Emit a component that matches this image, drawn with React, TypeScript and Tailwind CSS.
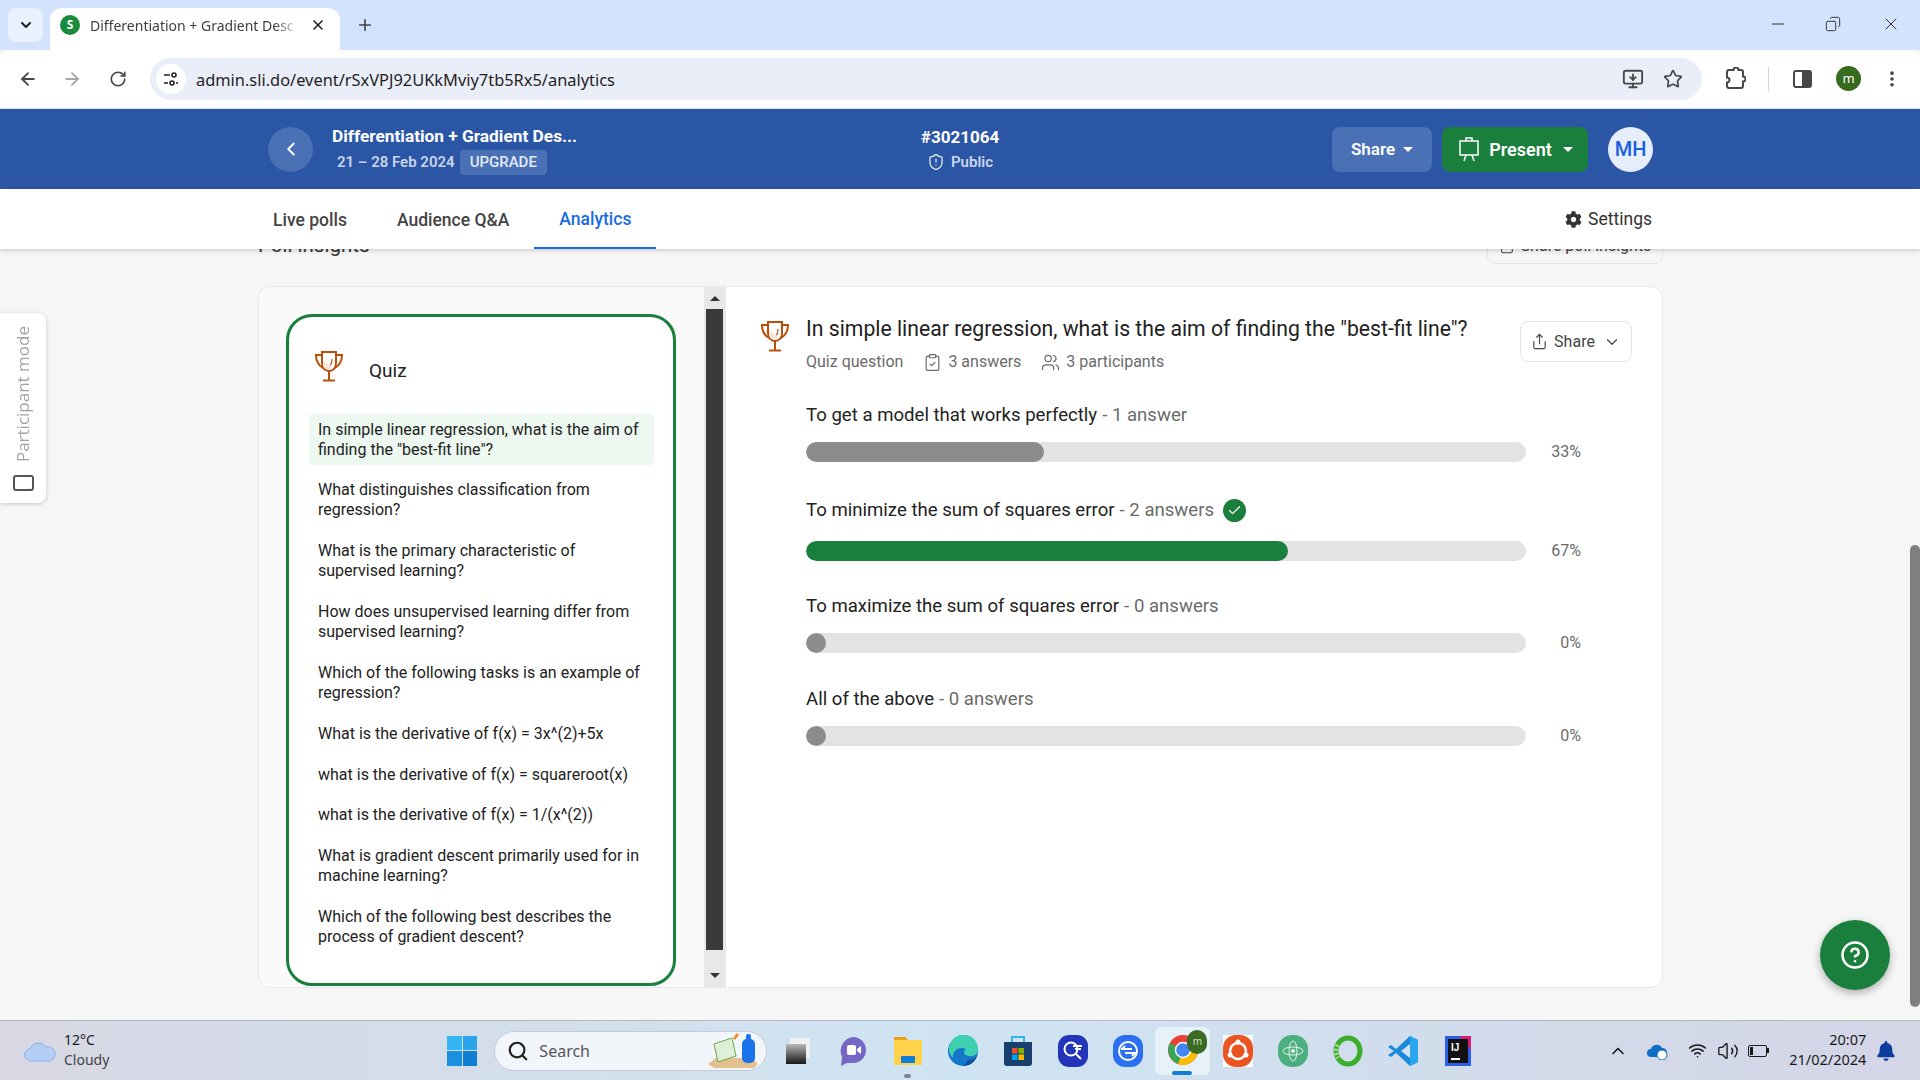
import { ArrowLeft, ArrowRight, ChevronDown, ChevronLeft, ChevronUp, CircleHelp, ClipboardCheck, MonitorDown, MoreVertical, Plus, RotateCw, Search, ShieldAlert, Share, Star, Users, Volume2, Wifi, X, Check, Minus, Copy } from 'lucide-react';
import { FaBell, FaCog } from 'react-icons/fa';

const questions = [
  ['In simple linear regression, what is the aim of', 'finding the "best-fit line"?'],
  ['What distinguishes classification from', 'regression?'],
  ['What is the primary characteristic of', 'supervised learning?'],
  ['How does unsupervised learning differ from', 'supervised learning?'],
  ['Which of the following tasks is an example of', 'regression?'],
  ['What is the derivative of f(x) = 3x^(2)+5x'],
  ['what is the derivative of f(x) = squareroot(x)'],
  ['what is the derivative of f(x) = 1/(x^(2))'],
  ['What is gradient descent primarily used for in', 'machine learning?'],
  ['Which of the following best describes the', 'process of gradient descent?'],
];

const answers = [
  { label: 'To get a model that works perfectly', count: '1 answer', pct: 33, correct: false },
  { label: 'To minimize the sum of squares error', count: '2 answers', pct: 67, correct: true },
  { label: 'To maximize the sum of squares error', count: '0 answers', pct: 0, correct: false },
  { label: 'All of the above', count: '0 answers', pct: 0, correct: false },
];

function QuizTrophy({ className }: { className?: string }) {
  return (
    <svg width="30" height="32" viewBox="0 0 30 32" fill="none" stroke="#b8500c" strokeWidth="2" className={className}>
      <path d="M8 2h14v11c0 5-3 8-7 8s-7-3-7-8z" />
      <path d="M8 5H2c0 6 2 10 7 13M22 5h6c0 6-2 10-7 13" />
      <path d="M15 21v9M9 30.500h12" />
      <path d="M10 18c-1-3-1-5 0-7l8 6-3 3z" fill="#f6e6da" stroke="none" />
      <path d="M18 9c0 3 0 5-2 6" strokeWidth="1.2" />
    </svg>
  );
}

function ChromeBar() {
  return (
    <div className="font-['Noto_Sans',sans-serif]">
      <div className="h-[50px] bg-[#d3e3fd] flex items-end relative">
        <div className="w-[35px] h-[34px] mb-2 ml-2 rounded-lg bg-[#e9f0fe] flex items-center justify-center">
          <ChevronDown size={16} strokeWidth={3} className="text-[#222]" />
        </div>
        <div className="ml-[7px] w-[290px] h-[42px] bg-white rounded-t-xl flex items-center pl-[10px] pb-[8px]">
          <div className="w-5 h-5 rounded-full bg-[#1a8a3e] text-white text-[12px] font-bold flex items-center justify-center">S</div>
          <div className="ml-[10px] w-[210px] whitespace-nowrap text-[14px] text-[#3c4043] [mask-image:linear-gradient(to_right,black_88%,transparent)]">Differentiation + Gradient Desc</div>
          <X size={16} strokeWidth={2.5} className="ml-[10px] text-[#222]" />
        </div>
        <Plus size={18} strokeWidth={2.2} className="ml-4 mb-[16px] text-[#444]" />
        <div className="ml-auto flex items-center pr-[19px] mb-[16px] text-[#222]">
          <Minus size={20} strokeWidth={1.1} />
          <Copy size={16} strokeWidth={1.3} className="ml-[37px] scale-x-[-1]" />
          <X size={20} strokeWidth={1.1} className="ml-[40px]" />
        </div>
      </div>
      <div className="h-[60px] bg-white border-b border-[#dfdfdf] rounded-t-xl -mt-px flex items-center text-[#474747]">
        <ArrowLeft size={20} strokeWidth={2.2} className="ml-[18px]" />
        <ArrowRight size={20} strokeWidth={2.2} className="ml-[24px] text-[#a8a8a8]" />
        <RotateCw size={18} strokeWidth={2.2} className="ml-[27px]" />
        <div className="ml-[23px] w-[1552px] h-[42px] rounded-full bg-[#eaeef8] flex items-center pl-[6px] pr-[19px]">
          <div className="w-[30px] h-[30px] rounded-full bg-white flex items-center justify-center">
            <svg width="16" height="16" viewBox="0 0 16 16" fill="none" stroke="#222" strokeWidth="1.6">
              <path d="M1 4h6M1 12h4" />
              <circle cx="11" cy="4" r="2" />
              <circle cx="9" cy="12" r="2" />
              <path d="M13 12h2" />
            </svg>
          </div>
          <span className="ml-[10px] pt-[3px] text-[16.400px] text-[#1f1f1f]">admin.sli.do/event/rSxVPJ92UKkMviy7tb5Rx5/analytics</span>
          <MonitorDown size={22} strokeWidth={2} className="ml-auto" />
          <Star size={20} strokeWidth={2} className="ml-[19px]" />
        </div>
        <svg width="22" height="24" viewBox="0 0 22 24" fill="none" stroke="#474747" strokeWidth="2" className="ml-[22px]">
          <path d="M5 3h4.500a2.500 2.500 0 0 1 5 0H17a2 2 0 0 1 2 2v4.500a2.500 2.500 0 0 1 0 5V19a2 2 0 0 1-2 2H5a2 2 0 0 1-2-2v-3.500a2.500 2.500 0 0 0 0-5V5a2 2 0 0 1 2-2z" />
        </svg>
        <div className="ml-[22px] w-px h-6 bg-[#c7d8f0]" />
        <div className="ml-[24px] w-[19px] h-[18px] border-2 border-[#474747] rounded-[3px] flex justify-end">
          <div className="w-[8px] bg-[#474747]" />
        </div>
        <div className="ml-[24px] w-[25px] h-[25px] rounded-full bg-[#386a1f] text-white text-[13px] flex items-center justify-center">m</div>
        <MoreVertical size={20} strokeWidth={2.4} className="ml-[21px]" />
      </div>
    </div>
  );
}

function AppHeader() {
  return (
    <header className="relative z-10 h-[80px] bg-[#2a56a5] flex items-center pl-[268px] pr-[267px] text-white font-['Roboto',sans-serif]">
      <div className="w-[45px] h-[45px] rounded-full bg-[#4a70b5] flex items-center justify-center">
        <ChevronLeft size={22} strokeWidth={2} />
      </div>
      <div className="ml-[19px] w-[300px]">
        <div className="text-[17.300px] font-bold leading-[24px]">Differentiation + Gradient Des...</div>
        <div className="flex items-center mt-[2px]">
          <span className="ml-[5px] text-[15px] font-semibold text-[#c9d5ec]">21 – 28 Feb 2024</span>
          <span className="ml-[5px] h-[25px] px-[10px] rounded bg-[#4a70b5] text-[15px] font-medium leading-[25px] text-[#e3eaf7]">UPGRADE</span>
        </div>
      </div>
      <div className="ml-[228px] w-[200px] flex flex-col items-center">
        <div className="text-[17px] font-bold leading-[24px]">#3021064</div>
        <div className="flex items-center gap-[6px] mt-[2px]">
          <ShieldAlert size={18} strokeWidth={1.5} />
          <span className="text-[15px] font-semibold text-[#c9d5ec]">Public</span>
        </div>
      </div>
      <div className="ml-auto flex items-center">
        <div className="w-[100px] h-[45px] pt-[1px] rounded-lg bg-[#4a70b5] flex items-center justify-center gap-[8px] text-[17px] font-semibold">
          Share
          <span className="w-0 h-0 border-x-[5px] border-x-transparent border-t-[5px] border-t-white" />
        </div>
        <div className="ml-[10px] w-[146px] h-[45px] rounded-lg bg-[#1a7f3c] flex items-center justify-center text-[18px] font-semibold">
          <svg width="24" height="26" viewBox="0 0 24 26" fill="none" stroke="white" strokeWidth="1.500">
            <path d="M3 5h18v14H3zM9 5V2h6v3M9 19l-2 6M15 19l2 6" />
          </svg>
          <span className="ml-[8px]">Present</span>
          <span className="ml-[11px] w-0 h-0 border-x-[5px] border-x-transparent border-t-[5px] border-t-white" />
        </div>
        <div className="ml-[20px] w-[45px] h-[45px] rounded-full bg-[#e6eefc] text-[#1a5fe0] flex items-center justify-center text-[20px] font-medium">MH</div>
      </div>
    </header>
  );
}

function AppNav() {
  return (
    <nav className="relative z-10 h-[60px] bg-white shadow-[0_2px_4px_rgba(0,0,0,0.15)] flex pl-[248px] pr-[268px] text-[17.500px] font-medium font-['Roboto',sans-serif] text-[#444]">
      <div className="px-[25px] pt-[2px] flex items-center">Live polls</div>
      <div className="px-[25px] pt-[2px] flex items-center">Audience Q&amp;A</div>
      <div className="px-[25px] pt-[2px] flex items-center text-[#1a6be0] border-b-2 border-[#1a6be0]">Analytics</div>
      <div className="ml-auto pt-[1px] flex items-center gap-[6px] text-[#333] font-normal">
        <FaCog size={17} />
        Settings
      </div>
    </nav>
  );
}

function QuizList() {
  return (
    <div className="w-[467px] bg-[#fafafa] rounded-l-xl flex">
      <div className="ml-[27px] mt-[27px] w-[390px] h-[672px] rounded-[26px] border-[3px] border-[#1a7f3c] bg-white pl-[20px] pr-[19px]">
        <div className="flex items-center mt-[38px] h-[32px] pl-[5px]">
          <QuizTrophy className="mb-[10px]" />
          <span className="ml-[25px] text-[19px] text-[#222]">Quiz</span>
        </div>
        <div className="mt-[27px] flex flex-col gap-[9.850px] text-[16px] leading-[20px] text-[#222]">
          {questions.map((q, i) => (
            <div key={i} className={`px-[9px] py-[5.5px] rounded ${i === 0 ? 'bg-[#ecf8f0]' : ''}`}>
              {q.map((line) => <div key={line} className="whitespace-nowrap">{line}</div>)}
            </div>
          ))}
        </div>
      </div>
      <div className="ml-auto w-[22px] bg-[#e8e8e8] flex flex-col items-center pl-[2px] pr-[3px]">
        <div className="h-[22px] flex items-center">
          <span className="w-0 h-0 border-x-[5px] border-x-transparent border-b-[5px] border-b-[#333]" />
        </div>
        <div className="w-full h-[641px] bg-[#3a3a3a]" />
        <div className="flex-1 flex items-end pb-[9px]">
          <span className="w-0 h-0 border-x-[5px] border-x-transparent border-t-[5px] border-t-[#333]" />
        </div>
      </div>
    </div>
  );
}

function AnswerRow({ a }: { a: (typeof answers)[number] }) {
  return (
    <div className="first:-mb-[2px] last:mt-[1px]">
      <div className={`flex items-center text-[18.600px] ${a.correct ? 'h-[35px]' : 'h-[26px]'}`}>
        <span className="text-[#222]">{a.label}</span>
        <span className="text-[#6b6b6b] ml-[5px]">- {a.count}</span>
        {a.correct && (
          <span className="ml-[9px] w-[23px] h-[23px] rounded-full bg-[#1a7f3c] flex items-center justify-center">
            <Check size={15} strokeWidth={2} className="text-white" />
          </span>
        )}
      </div>
      <div className="flex items-center mt-[11px]">
        <div className="w-[720px] h-[20px] rounded-full bg-[#e3e3e3] overflow-hidden">
          <div
            className={`h-full min-w-[20px] rounded-full ${a.correct ? 'bg-[#1a7f3c]' : 'bg-[#8c8c8c]'}`}
            style={{ width: `${a.pct}%` }}
          />
        </div>
        <span className="w-[55px] text-right text-[16px] text-[#6b6b6b]">{a.pct}%</span>
      </div>
    </div>
  );
}

function QuestionPanel() {
  return (
    <div className="flex-1 pl-[34px] pr-[30px] pt-[27px] font-['Roboto',sans-serif]">
      <div className="flex">
        <QuizTrophy className="mt-[6px]" />
        <div className="ml-[16px]">
          <div className="text-[21.200px] leading-[30px] text-[#222]">In simple linear regression, what is the aim of finding the "best-fit line"?</div>
          <div className="flex items-center mt-[6px] text-[16px] text-[#6b6b6b]">
            Quiz question
            <ClipboardCheck size={19} strokeWidth={1.5} className="ml-[20px] mr-[6px]" />
            3 answers
            <Users size={19} strokeWidth={1.5} className="ml-[20px] mr-[6px]" />
            3 participants
          </div>
        </div>
        <div className="ml-auto mt-[7px] w-[112px] h-[41px] border border-[#e3e3e3] rounded-lg flex items-center justify-center gap-[6px] text-[16px] text-[#444]">
          <Share size={17} strokeWidth={1.6} />
          Share
          <ChevronDown size={18} strokeWidth={1.6} className="ml-[2px]" />
        </div>
      </div>
      <div className="ml-[46px] mt-[29px] flex flex-col gap-[31px]">
        {answers.map((a) => <AnswerRow key={a.label} a={a} />)}
      </div>
    </div>
  );
}

function TrayIcon({ children }: { children: React.ReactNode }) {
  return <div className="relative w-[55px] h-[40px] flex items-center justify-center">{children}</div>;
}

function Taskbar() {
  return (
    <footer className="h-[60px] border-t border-[#b4b8c4] bg-gradient-to-r from-[#d8d8e4] via-[#cfe4f2] to-[#d4d5e6] flex items-center font-['Noto_Sans',sans-serif] text-[#1b1b1b]">
      <div className="ml-[24px] w-[32px]">
        <svg width="32" height="22" viewBox="0 0 32 22">
          <path d="M7 21a6 6 0 0 1-1-12 9 9 0 0 1 16-2 7 7 0 0 1 4 14z" fill="#b4cdf2" stroke="#8fb1e8" />
        </svg>
      </div>
      <div className="ml-[8px] text-[14px] leading-[20px] -mt-[2px]">
        <div>12°C</div>
        <div className="text-[#444]">Cloudy</div>
      </div>
      <div className="ml-[338px] w-[30px] h-[30px] grid grid-cols-2 gap-[1px]">
        <div className="bg-[#35b6f2]" /><div className="bg-[#2ba5ea]" />
        <div className="bg-[#1c90e0]" /><div className="bg-[#0f7fd6]" />
      </div>
      <div className="ml-[17px] w-[273px] h-[40px] rounded-full bg-[#f2f6fb] border border-[#c4ccd8] flex items-center pl-[12px] pr-[6px] text-[16px] text-[#555]">
        <Search size={22} strokeWidth={2.4} className="text-[#222]" />
        <span className="ml-[10px]">Search</span>
        <svg width="54" height="38" viewBox="0 0 54 38" className="ml-auto">
          <path d="M2 32l8-6h36l6 6-4 4H8z" fill="#e3c08d" />
          <path d="M8 12l18-6 4 18-18 6z" fill="#dff0d8" stroke="#6aa84f" />
          <path d="M27 6l4-5 2 2-4 5z" fill="#f28c28" />
          <rect x="36" y="7" width="13" height="24" rx="5" fill="#1a73e8" />
          <rect x="40" y="2" width="5" height="6" rx="2" fill="#1a73e8" />
        </svg>
      </div>
      <div className="ml-[3px] flex items-center">
        <TrayIcon>
          <div className="relative w-[24px] h-[26px]">
            <div className="absolute right-0 top-0 w-[20px] h-[20px] bg-[#f0f0f0]" />
            <div className="absolute left-0 bottom-0 w-[20px] h-[20px] bg-gradient-to-b from-[#bbb] to-[#1b1b1b]" />
          </div>
        </TrayIcon>
        <TrayIcon>
          <svg width="30" height="32" viewBox="0 0 30 32">
            <path d="M15 2a13 13 0 0 1 0 26H9l-6 3 1-9A14 14 0 0 1 15 2z" fill="#7568c4" />
            <rect x="9" y="10" width="9" height="10" rx="2" fill="#fff" />
            <path d="M19 14l4-3v8l-4-3z" fill="#fff" />
          </svg>
        </TrayIcon>
        <TrayIcon>
          <svg width="32" height="30" viewBox="0 0 32 30">
            <path d="M2 1h11l3 3h14v25H2z" fill="#ffd24a" />
            <path d="M2 1h11l3 3H2z" fill="#e8a317" />
            <rect x="9" y="20" width="14" height="7" rx="1" fill="#0f7fd6" />
          </svg>
          <div className="absolute -bottom-[7px] left-[24px] w-[7px] h-[4px] rounded-full bg-[#7d8590]" />
        </TrayIcon>
        <TrayIcon>
          <svg width="32" height="32" viewBox="0 0 32 32">
            <circle cx="16" cy="16" r="15" fill="#1577c9" />
            <path d="M2 14A14 14 0 0 1 31 14c0 6-5 8-10 7-5-1-5-5-2-7-6-3-14 1-13 9a12 12 0 0 1-4-9z" fill="#3fd0b0" />
            <path d="M21 25c4 0 7-1 9-4-2 6-7 10-14 10 2-1 3-3 5-6z" fill="#0d4fa3" />
          </svg>
        </TrayIcon>
        <TrayIcon>
          <svg width="30" height="32" viewBox="0 0 30 32">
            <path d="M9 7V2h12v5" fill="none" stroke="#2cb7e8" strokeWidth="2" />
            <path d="M1 7h28v21a3 3 0 0 1-3 3H4a3 3 0 0 1-3-3z" fill="#173f70" />
            <rect x="9" y="13" width="5.5" height="5.5" fill="#f25022" />
            <rect x="15.5" y="13" width="5.5" height="5.5" fill="#7fba00" />
            <rect x="9" y="19.5" width="5.5" height="5.5" fill="#00a4ef" />
            <rect x="15.5" y="19.5" width="5.5" height="5.5" fill="#ffb900" />
          </svg>
        </TrayIcon>
        <TrayIcon>
          <svg width="30" height="32" viewBox="0 0 30 32">
            <rect width="30" height="32" rx="11" fill="#2434b8" />
            <circle cx="13" cy="14" r="6.5" fill="none" stroke="#fff" strokeWidth="2" />
            <path d="M18 19l5 5M15 11h9M17 14h6" stroke="#fff" strokeWidth="2" />
          </svg>
        </TrayIcon>
        <TrayIcon>
          <svg width="30" height="32" viewBox="0 0 30 32">
            <rect width="30" height="32" rx="12" fill="#2b70f0" />
            <circle cx="15" cy="16" r="9" fill="none" stroke="#fff" strokeWidth="2" />
            <path d="M8 14h11M12 11l-3 3M23 18H12M19 21l3-3" stroke="#fff" strokeWidth="2" />
          </svg>
        </TrayIcon>
        <div className="relative w-[55px] h-[48px] rounded-md bg-[#e6f1f8] flex items-center justify-center">
          <svg width="30" height="30" viewBox="0 0 30 30" className="mb-[2px]">
            <circle cx="15" cy="15" r="15" fill="#e94235" />
            <path d="M15 15 2 8A15 15 0 0 0 10 29z" fill="#34a853" />
            <path d="M15 15 10 29.2A15 15 0 0 0 29.5 12z" fill="#fbbc04" />
            <circle cx="15" cy="15" r="7.5" fill="#4285f4" stroke="#fff" strokeWidth="1.5" />
          </svg>
          <div className="absolute top-[3px] right-[3px] w-[20px] h-[24px] rounded-full bg-[#3a6a24] text-[#cfe0c0] text-[10px] flex items-center justify-center">m</div>
          <div className="absolute bottom-0 left-[17px] w-[20px] h-[4px] rounded-full bg-[#0f7fd6]" />
        </div>
        <TrayIcon>
          <svg width="30" height="32" viewBox="0 0 30 32">
            <rect width="30" height="32" fill="#fff" />
            <rect width="30" height="32" rx="13" fill="#e95420" />
            <circle cx="15" cy="16" r="8" fill="none" stroke="#fff" strokeWidth="2.5" />
            <circle cx="15" cy="7" r="2.5" fill="#fff" />
            <circle cx="7" cy="20" r="2.5" fill="#fff" />
            <circle cx="23" cy="20" r="2.5" fill="#fff" />
          </svg>
        </TrayIcon>
        <TrayIcon>
          <svg width="30" height="32" viewBox="0 0 30 32">
            <rect width="30" height="32" rx="14" fill="#4caf7f" />
            <ellipse cx="15" cy="16" rx="10" ry="4" fill="none" stroke="#e8f5e9" />
            <ellipse cx="15" cy="16" rx="4" ry="10" fill="none" stroke="#e8f5e9" />
            <circle cx="15" cy="16" r="2" fill="#e8f5e9" />
          </svg>
        </TrayIcon>
        <TrayIcon>
          <svg width="30" height="32" viewBox="0 0 30 32">
            <ellipse cx="15" cy="16" rx="12" ry="13" fill="none" stroke="#3cae2d" strokeWidth="5" />
            <path d="M5 10a12 13 0 0 0 0 13" fill="none" stroke="#a4d89a" strokeWidth="5" strokeDasharray="2 2" />
          </svg>
        </TrayIcon>
        <TrayIcon>
          <svg width="30" height="32" viewBox="0 0 30 32">
            <path d="M22 1 30 5v22l-8 4L8 18l-5 4-3-2 6-4-6-4 3-2 5 4z" fill="#1a8ad8" />
            <path d="M22 1l8 4v22l-8 4z" fill="#2aa6ee" />
            <path d="M22 9v14l-9-7z" fill="#cfe4f2" />
          </svg>
        </TrayIcon>
        <TrayIcon>
          <svg width="26" height="30" viewBox="0 0 26 30">
            <rect width="26" height="30" fill="#2a60e8" />
            <path d="M26 0v14L14 0z" fill="#d81b78" />
            <rect x="3" y="3" width="20" height="24" fill="#111" />
            <rect x="6" y="22" width="9" height="2" fill="#fff" />
            <text x="6" y="15" fontSize="10" fontWeight="700" fill="#fff" fontFamily="Liberation Sans, sans-serif">IJ</text>
          </svg>
        </TrayIcon>
      </div>
      <ChevronUp size={20} strokeWidth={2} className="ml-[123px]" />
      <svg width="22" height="18" viewBox="0 0 22 18" className="ml-[18px]">
        <path d="M5 15a4 4 0 0 1 0-8 6 6 0 0 1 11-1 4 4 0 0 1 1 9z" fill="#0f6fc6" />
        <circle cx="16" cy="13" r="5" fill="#fff" stroke="#0f6fc6" />
      </svg>
      <Wifi size={19} strokeWidth={2} className="ml-[20px]" />
      <Volume2 size={22} strokeWidth={1.5} className="ml-[10px]" />
      <div className="ml-[9px] flex items-center">
        <div className="w-[19px] h-[12px] border border-[#1b1b1b] rounded-[2px] p-[1px]">
          <div className="w-[3px] h-full bg-[#1b1b1b]" />
        </div>
        <div className="w-[2px] h-[5px] bg-[#1b1b1b]" />
      </div>
      <div className="ml-[7px] w-[90px] -mt-[3px] text-right text-[14.500px] leading-[20px]">
        <div>20:07</div>
        <div>21/02/2024</div>
      </div>
      <FaBell size={20} className="ml-[10px] text-[#0b3d9e]" />
    </footer>
  );
}

export default function App() {
  return (
    <div className="w-[1920px] h-[1080px] overflow-hidden flex flex-col bg-[#f6f6f6] font-['Roboto',sans-serif]">
      <ChromeBar />
      <AppHeader />
      <AppNav />
      <main className="flex-1 relative">
        <div className="pl-[258px] pr-[257px] -mt-[24px]">
          <div className="flex items-center justify-between h-[38px]">
            <span className="text-[20.500px] pt-[2px] text-[#333]">Poll insights</span>
            <div className="w-[176px] h-[38px] mt-[1px] pt-[3px] border border-[#e3e3e3] rounded-lg flex items-center justify-center gap-[6px] text-[16px] text-[#444]">
              <Share size={16} strokeWidth={1.6} />
              Share poll insights
            </div>
          </div>
          <div className="mt-[23px] h-[702px] border border-[#e8e8e8] rounded-xl bg-white flex">
            <QuizList />
            <QuestionPanel />
          </div>
        </div>
        <div className="absolute left-0 top-[64px] w-[46px] h-[190px] bg-white rounded-r-lg shadow-[0_1px_4px_rgba(0,0,0,0.2)] flex flex-col items-center justify-end pb-[12px] gap-[13px]">
          <span className="[writing-mode:vertical-rl] rotate-180 text-[17px] text-[#a3a3a3] font-['Open_Sans',sans-serif]">Participant mode</span>
          <div className="w-[21px] h-[16px] border-2 border-[#555] rounded-[3px]" />
        </div>
        <div className="absolute right-[30px] bottom-[30px] w-[70px] h-[70px] rounded-full bg-[#1a7f3c] shadow-[0_3px_8px_rgba(0,0,0,0.3)] flex items-center justify-center">
          <CircleHelp size={30} strokeWidth={2} className="text-white" />
        </div>
        <div className="absolute right-0 bottom-[13px] w-[10px] h-[462px] rounded-full bg-[#7f7f7f]" />
      </main>
      <Taskbar />
    </div>
  );
}
